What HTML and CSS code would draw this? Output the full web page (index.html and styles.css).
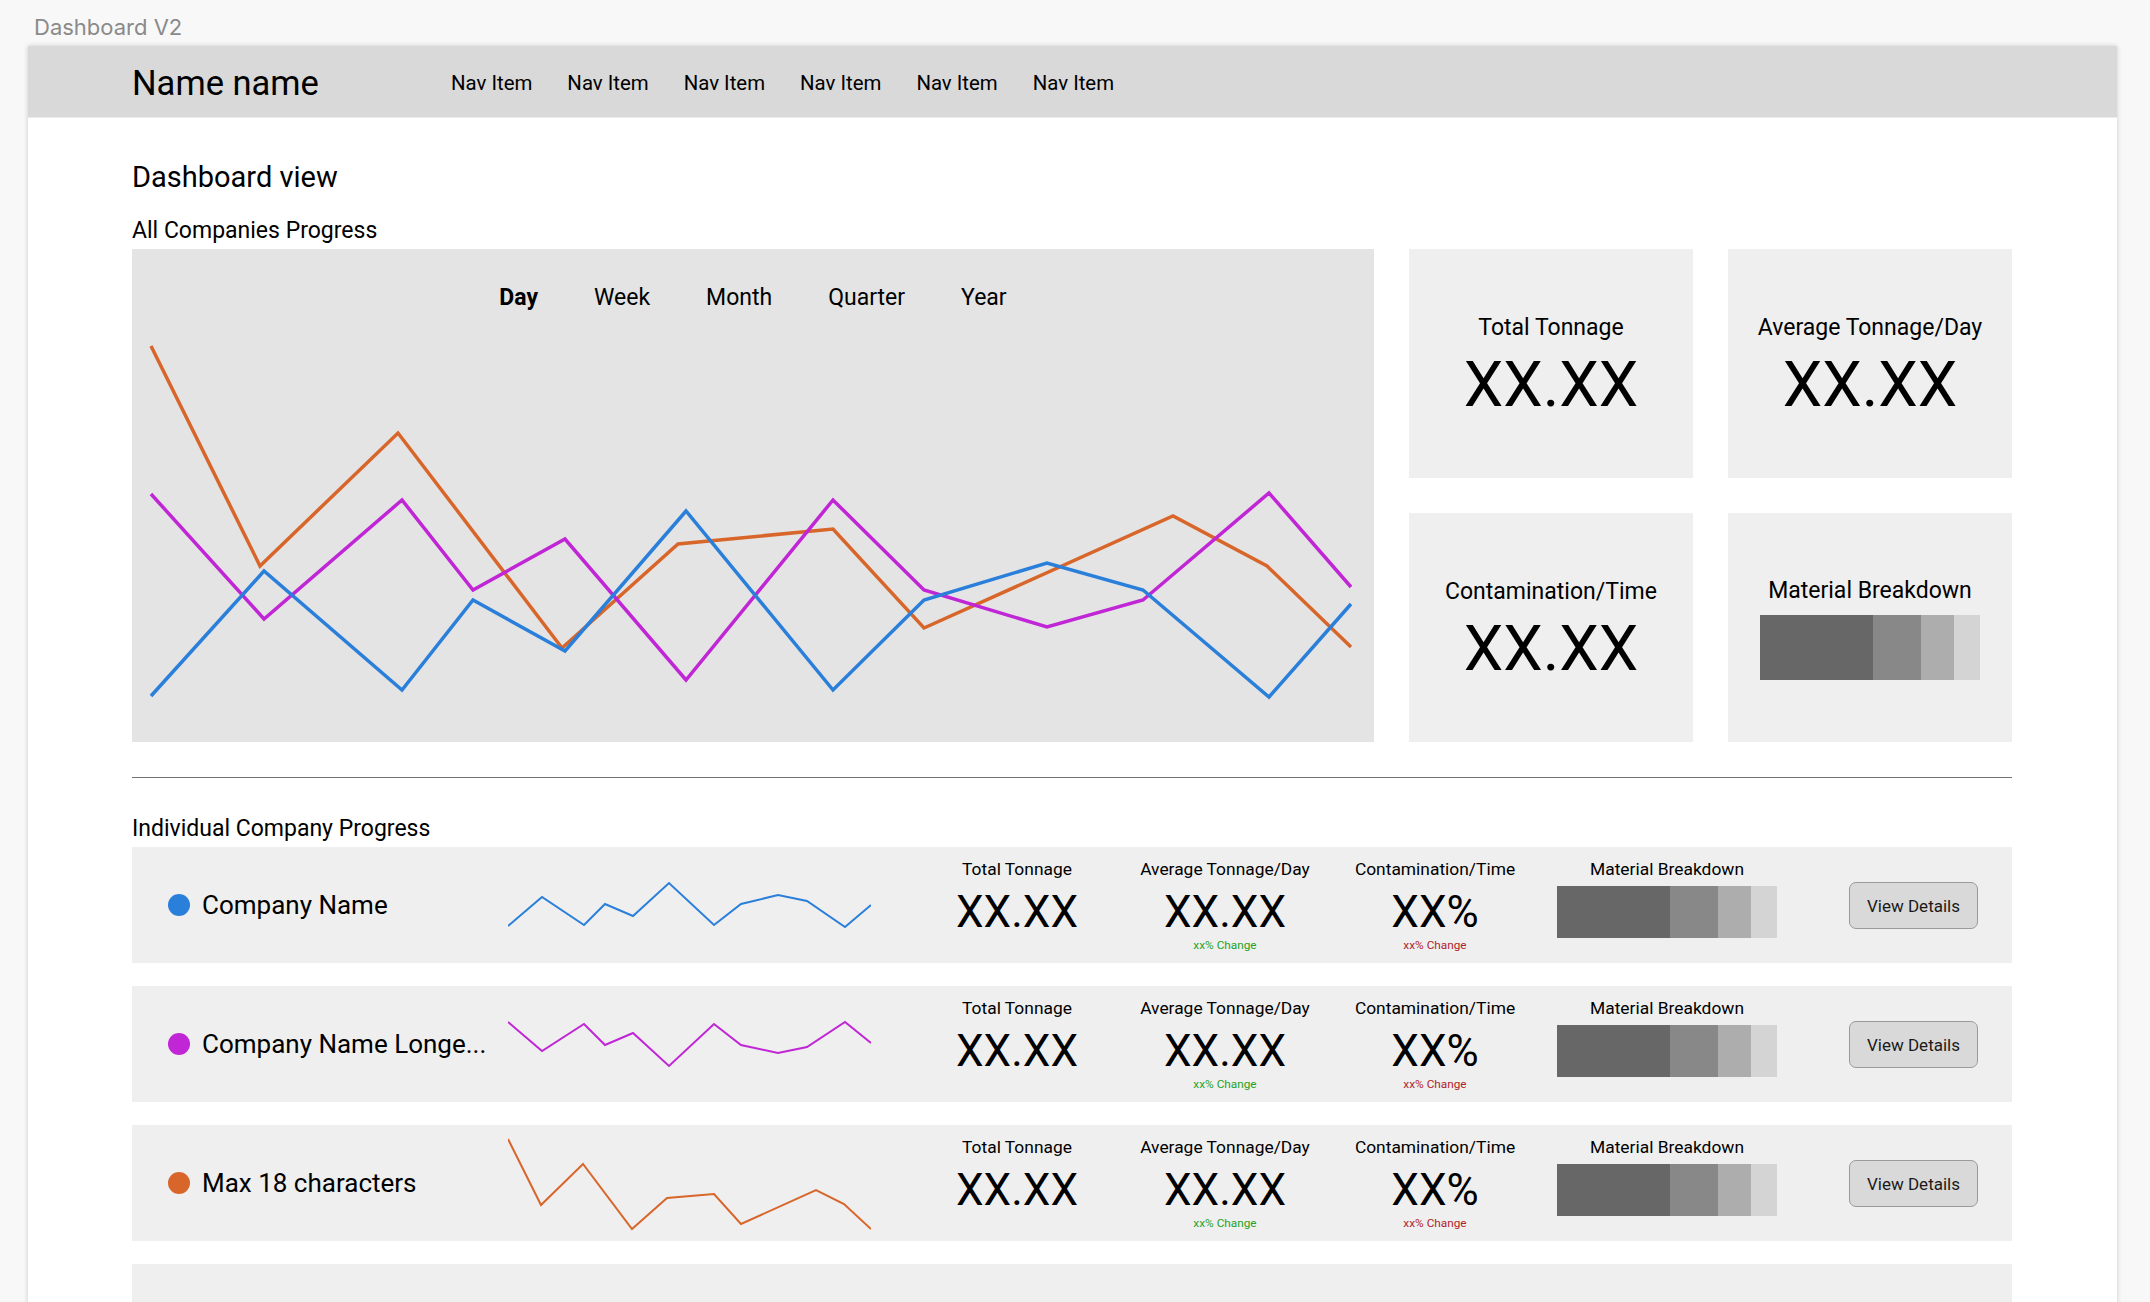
FILE: index.html
```html
<!DOCTYPE html>
<html lang="en">
<head>
<meta charset="utf-8">
<title>Dashboard V2</title>
<link rel="stylesheet" href="styles.css">
</head>
<body>
<div class="page-title">Dashboard V2</div>
<div class="frame">
  <header class="topbar">
    <div class="brand">Name name</div>
    <nav class="nav">
      <span class="nav-item">Nav Item</span>
      <span class="nav-item">Nav Item</span>
      <span class="nav-item">Nav Item</span>
      <span class="nav-item">Nav Item</span>
      <span class="nav-item">Nav Item</span>
      <span class="nav-item">Nav Item</span>
    </nav>
  </header>
  <main class="content">
    <h1 class="page-heading">Dashboard view</h1>
    <h2 class="section-title">All Companies Progress</h2>
    <section class="overview">
      <div class="chart">
        <div class="tabs">
          <span class="tab active">Day</span>
          <span class="tab">Week</span>
          <span class="tab">Month</span>
          <span class="tab">Quarter</span>
          <span class="tab">Year</span>
        </div>
        <svg class="chart-lines" viewBox="0 0 1242 493" fill="none" stroke-width="3.5">
          <polyline stroke="#d8662a" points="19,97 128,317 266,184 430,399 546,295 701,280 792,379 1041,267 1135,317 1219,398"/>
          <polyline stroke="#c025d6" points="19,245 132,370 270,251 341,341 433,290 554,431 701,251 792,341 915,378 1011,351 1137,244 1219,338"/>
          <polyline stroke="#2a7fdb" points="19,447 132,322 270,441 341,351 433,402 554,262 701,441 792,351 915,314 1011,341 1137,448 1219,355"/>
        </svg>
      </div>
      <div class="stat-grid">
        <div class="stat-card">
          <div class="stat-label">Total Tonnage</div>
          <div class="stat-value">XX.XX</div>
        </div>
        <div class="stat-card">
          <div class="stat-label">Average Tonnage/Day</div>
          <div class="stat-value">XX.XX</div>
        </div>
        <div class="stat-card">
          <div class="stat-label">Contamination/Time</div>
          <div class="stat-value">XX.XX</div>
        </div>
        <div class="stat-card">
          <div class="stat-label">Material Breakdown</div>
          <div class="material-bar large">
            <span class="seg seg1"></span><span class="seg seg2"></span><span class="seg seg3"></span><span class="seg seg4"></span>
          </div>
        </div>
      </div>
    </section>
    <hr class="divider">
    <h2 class="section-title second">Individual Company Progress</h2>
    <div class="company-list">
      <div class="company-row">
        <div class="company"><span class="dot blue"></span><span class="company-name">Company Name</span></div>
        <svg class="sparkline" viewBox="0 0 363 116" fill="none" stroke-width="2">
          <polyline stroke="#2a7fdb" points="0,79 34,50 76,78 97,57 125,69 161,36 206,78 233,57 270,48 299,54 337,80 363,58"/>
        </svg>
        <div class="metric metric-total"><div class="metric-label">Total Tonnage</div><div class="metric-value">XX.XX</div></div>
        <div class="metric metric-avg"><div class="metric-label">Average Tonnage/Day</div><div class="metric-value">XX.XX</div><div class="change up">xx% Change</div></div>
        <div class="metric metric-cont"><div class="metric-label">Contamination/Time</div><div class="metric-value">XX%</div><div class="change down">xx% Change</div></div>
        <div class="metric metric-mat"><div class="metric-label">Material Breakdown</div>
          <div class="material-bar small"><span class="seg seg1"></span><span class="seg seg2"></span><span class="seg seg3"></span><span class="seg seg4"></span></div>
        </div>
        <button class="details-btn">View Details</button>
      </div>
      <div class="company-row">
        <div class="company"><span class="dot purple"></span><span class="company-name">Company Name Longe...</span></div>
        <svg class="sparkline" viewBox="0 0 363 116" fill="none" stroke-width="2">
          <polyline stroke="#c025d6" points="0,36 34,65 76,38 97,59 125,47 161,80 206,38 233,59 270,67 299,61 337,36 363,57"/>
        </svg>
        <div class="metric metric-total"><div class="metric-label">Total Tonnage</div><div class="metric-value">XX.XX</div></div>
        <div class="metric metric-avg"><div class="metric-label">Average Tonnage/Day</div><div class="metric-value">XX.XX</div><div class="change up">xx% Change</div></div>
        <div class="metric metric-cont"><div class="metric-label">Contamination/Time</div><div class="metric-value">XX%</div><div class="change down">xx% Change</div></div>
        <div class="metric metric-mat"><div class="metric-label">Material Breakdown</div>
          <div class="material-bar small"><span class="seg seg1"></span><span class="seg seg2"></span><span class="seg seg3"></span><span class="seg seg4"></span></div>
        </div>
        <button class="details-btn">View Details</button>
      </div>
      <div class="company-row">
        <div class="company"><span class="dot orange"></span><span class="company-name">Max 18 characters</span></div>
        <svg class="sparkline" viewBox="0 0 363 116" fill="none" stroke-width="2">
          <polyline stroke="#d8662a" points="0,14 33,80 75,39 124,104 159,73 206,69 233,99 308,65 336,79 363,104"/>
        </svg>
        <div class="metric metric-total"><div class="metric-label">Total Tonnage</div><div class="metric-value">XX.XX</div></div>
        <div class="metric metric-avg"><div class="metric-label">Average Tonnage/Day</div><div class="metric-value">XX.XX</div><div class="change up">xx% Change</div></div>
        <div class="metric metric-cont"><div class="metric-label">Contamination/Time</div><div class="metric-value">XX%</div><div class="change down">xx% Change</div></div>
        <div class="metric metric-mat"><div class="metric-label">Material Breakdown</div>
          <div class="material-bar small"><span class="seg seg1"></span><span class="seg seg2"></span><span class="seg seg3"></span><span class="seg seg4"></span></div>
        </div>
        <button class="details-btn">View Details</button>
      </div>
      <div class="company-row"></div>
    </div>
  </main>
</div>
</body>
</html>
```
FILE: styles.css
```css
html, body {
  margin: 0;
  height: 100%;
  overflow: hidden;
}
body {
  background: #f8f8f8;
  font-family: Roboto, "Noto Sans", Arial, sans-serif;
  color: #000;
}
.page-title {
  height: 46px;
  box-sizing: border-box;
  padding: 17px 0 0 34px;
  font-family: Inter, Roboto, sans-serif;
  font-size: 22px;
  line-height: 20px;
  color: #8a8a8a;
}
.frame {
  margin-left: 28px;
  width: 2089px;
  min-height: 1300px;
  background: #fff;
  box-shadow: 0 0 5px rgba(0, 0, 0, 0.18);
}
.topbar {
  height: 71px;
  border-bottom: 1px solid #ececec;
  background: #d9d9d9;
  display: flex;
  align-items: center;
  padding-left: 104px;
}
.brand {
  width: 319px;
  font-size: 34.5px;
  line-height: 40px;
  padding-top: 2px;
}
.nav {
  display: flex;
  gap: 35px;
  font-size: 20.4px;
  padding-top: 2px;
}
.content {
  padding: 43px 105px 0 104px;
}
.page-heading {
  margin: 0;
  font-size: 29px;
  line-height: 32px;
  font-weight: 400;
}
.section-title {
  margin: 25px 0 5px;
  font-size: 23px;
  line-height: 26px;
  font-weight: 400;
}
.section-title.second {
  margin-top: 38px;
}
.overview {
  display: flex;
  gap: 35px;
  height: 493px;
}
.chart {
  position: relative;
  width: 1242px;
  flex: none;
  background: #e4e4e4;
}
.tabs {
  position: relative;
  z-index: 1;
  display: flex;
  justify-content: center;
  gap: 56px;
  padding-top: 35px;
  font-size: 23px;
  line-height: 27px;
}
.tab.active {
  font-weight: 700;
}
.chart-lines {
  position: absolute;
  left: 0;
  top: 0;
  width: 1242px;
  height: 493px;
}
.stat-grid {
  display: grid;
  grid-template-columns: 284px 284px;
  grid-template-rows: 229px 229px;
  gap: 35px;
}
.stat-card {
  background: #efefef;
  display: flex;
  flex-direction: column;
  align-items: center;
  justify-content: center;
  padding-top: 3px;
}
.stat-label {
  font-size: 23px;
  line-height: 26px;
}
.stat-value {
  font-size: 63px;
  line-height: 62px;
  margin-top: 13px;
}
.material-bar {
  display: flex;
}
.material-bar.large {
  width: 220px;
  height: 65px;
  margin-top: 11px;
}
.material-bar.small {
  width: 220px;
  height: 52px;
  margin-top: 7px;
}
.seg1 { width: 51.4%; background: #676767; }
.seg2 { width: 21.8%; background: #888888; }
.seg3 { width: 15%; background: #adadad; }
.seg4 { width: 11.8%; background: #d4d4d4; }
.divider {
  margin: 35px 0 0;
  border: 0;
  border-top: 1px solid #727272;
  height: 0;
}
.company-list {
  display: flex;
  flex-direction: column;
  gap: 23px;
}
.company-row {
  height: 116px;
  flex: none;
  background: #efefef;
  display: flex;
  padding: 0 34px 0 36px;
}
.company {
  width: 340px;
  flex: none;
  display: flex;
  align-items: center;
  gap: 12px;
}
.dot {
  width: 22px;
  height: 22px;
  border-radius: 50%;
  flex: none;
}
.dot.blue { background: #2a7fdb; }
.dot.purple { background: #c025d6; }
.dot.orange { background: #d8662a; }
.company-name {
  font-size: 26px;
  white-space: nowrap;
}
.sparkline {
  width: 363px;
  height: 116px;
  flex: none;
}
.metric {
  flex: none;
  display: flex;
  flex-direction: column;
  align-items: center;
  padding-top: 13px;
}
.metric-total { margin-left: 42px; width: 208px; }
.metric-avg { width: 208px; }
.metric-cont { width: 212px; }
.metric-mat { width: 252px; }
.metric-label {
  font-size: 17.4px;
  line-height: 19px;
}
.metric-value {
  font-size: 44px;
  line-height: 44px;
  margin-top: 11px;
}
.change {
  font-size: 11.8px;
  line-height: 14px;
  margin-top: 4px;
}
.change.up { color: #26a326; }
.change.down { color: #b0242a; }
.details-btn {
  margin-left: auto;
  align-self: center;
  width: 129px;
  height: 47px;
  border: 1.5px solid #9a9a9a;
  border-radius: 7px;
  background: #d9d9d9;
  font-family: Roboto, "Noto Sans", Arial, sans-serif;
  font-size: 17px;
  color: #1a1a1a;
  padding: 2px 0 0;
}
```
